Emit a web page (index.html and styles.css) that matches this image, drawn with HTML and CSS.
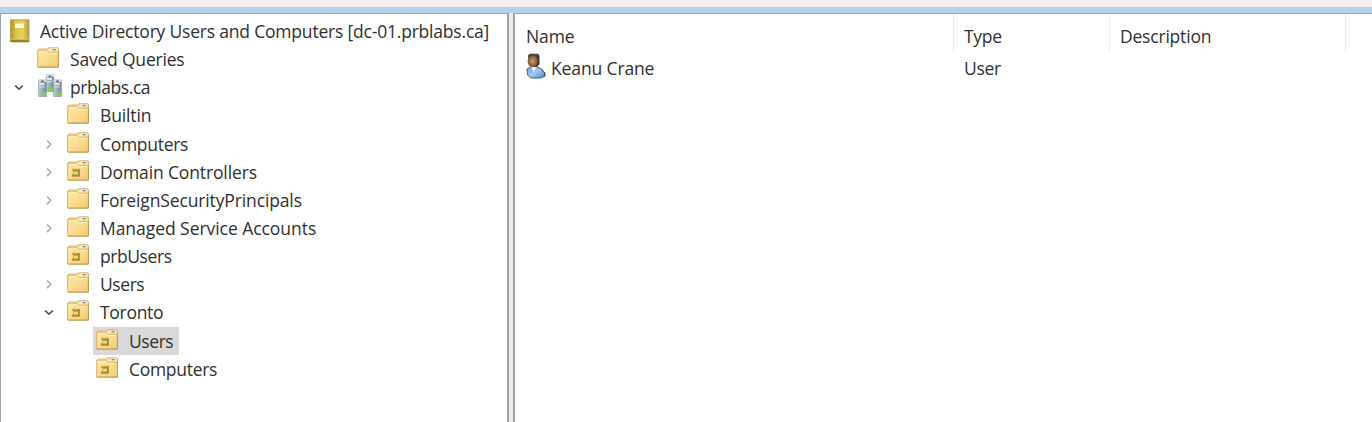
FILE: index.html
```html
<!DOCTYPE html>
<html lang="en">
<head>
<meta charset="utf-8">
<title>Active Directory Users and Computers</title>
<link rel="stylesheet" href="styles.css">
</head>
<body>
<svg class="defs" aria-hidden="true">
  <defs>
    <linearGradient id="gold" x1="0" y1="0" x2="1" y2="1"><stop offset="0" stop-color="#fde9b0"/><stop offset=".5" stop-color="#fbdd92"/><stop offset="1" stop-color="#f0cb70"/></linearGradient>
    <linearGradient id="cover" x1="0" y1="0" x2="1" y2="0"><stop offset="0" stop-color="#ae9125"/><stop offset=".25" stop-color="#d8be48"/><stop offset=".65" stop-color="#e6d16b"/><stop offset="1" stop-color="#b99a36"/></linearGradient>
    <linearGradient id="steel" x1="0" y1="0" x2="1" y2="0"><stop offset="0" stop-color="#bccad3"/><stop offset="1" stop-color="#788994"/></linearGradient>
    <radialGradient id="skin"><stop offset="0" stop-color="#c99b69"/><stop offset="1" stop-color="#7c5532"/></radialGradient>
    <linearGradient id="shirt" x1="0" y1="0" x2="1" y2="1"><stop offset="0" stop-color="#73a9df"/><stop offset=".5" stop-color="#9dc9f0"/><stop offset="1" stop-color="#5286bd"/></linearGradient>
    <symbol id="folder" viewBox="0 0 22 21">
      <path d="M.7 3.2 2 2H10L12 .8H20.8L21.5 1.6V20H.7Z" fill="url(#gold)" stroke="#cfae68" stroke-width=".9"/>
      <path d="M1.2 3.4H9.6L11.7 5.4H21" fill="none" stroke="#d8b566" stroke-width=".9"/>
      <path d="M1.5 4.4H9.2L11.3 6.4H20.6" fill="none" stroke="#fff0b7" stroke-width=".9"/>
      <path d="M12.5 3.6 14 1.6H20V3.9H12.5Z" fill="#f2edda"/>
      <path d="M15.5 2.7H18.8" stroke="#729199" stroke-width="1.3"/>
      <path d="M.8 20.2H21.4V5" fill="none" stroke="#bd9344" stroke-width=".8"/>
    </symbol>
    <symbol id="unit" viewBox="0 0 22 21">
      <use href="#folder" width="22" height="21"/>
      <path d="M5 8.8H12.6V16.6H5V14H6.2V11H5Z" fill="#c7aa43"/>
      <path d="M7 11H11V14.3H7Z" fill="#ecd680"/>
      <path d="M4.8 16H12.6M6.5 11H11M11.9 9V16" fill="none" stroke="#927722" stroke-width="1.2"/>
    </symbol>
    <symbol id="book" viewBox="0 0 20 24">
      <path d="M.5.8H19V23H.5Z" fill="url(#cover)" stroke="#b69a3d" stroke-width=".8"/>
      <path d="M1 20.5H19V23H1Z" fill="#a18127"/>
      <path d="M1 20H18.5" stroke="#ead77d" stroke-width=".8"/>
      <path d="M3 1V20" stroke="#c0a43b" stroke-width="1"/>
      <path d="M5 4.5H14V9H5Z" fill="#fff9c7"/>
    </symbol>
    <symbol id="tower" viewBox="0 0 9 18">
      <path d="M.5 1H8.5V17.5H.5Z" fill="url(#steel)" stroke="#8fa0aa" stroke-width=".7"/>
      <path d="M.6 1H8.4V3H.6Z" fill="#d1dce4"/>
      <path d="M3 2.2H6" stroke="#3c484f" stroke-width="1.1"/>
      <path d="M1.2 5H6.5" stroke="#f2f7f9" stroke-width="1.5"/>
      <path d="M1.2 7.8H6.5" stroke="#dce6eb" stroke-width="1"/>
    </symbol>
    <symbol id="domain" viewBox="0 0 26 24">
      <use href="#tower" x="8.5" y="0" width="9" height="18"/>
      <use href="#tower" x="1" y="5" width="9" height="18"/>
      <use href="#tower" x="16" y="5" width="9" height="18"/>
      <path d="M5 18.5H9V22.3H5ZM11.2 13.5H15.4V17.2H11.2ZM20 18.5H24V22.3H20Z" fill="#7bd348"/>
    </symbol>
    <symbol id="person" viewBox="0 0 20 26">
      <path d="M1 16 5 14H11L15 15.5 18.8 20V23.5L14 25H5L1.5 22Z" fill="url(#shirt)" stroke="#49627d" stroke-width="1"/>
      <path d="M5 14 7.5 19 11 14Z" fill="#e6f1fb"/>
      <path d="M2 2.5 4 .8H12L13.5 3V11L11 14H8L3 12Z" fill="#42382f"/>
      <ellipse cx="6.6" cy="8.2" rx="4.9" ry="6" fill="url(#skin)"/>
      <path d="M2 4.3Q7 1.3 12.6 4V1.3H4Z" fill="#4e4a45"/>
      <path d="M15 16 18.7 20V23" fill="none" stroke="#35475b" stroke-width="1"/>
    </symbol>
    <symbol id="closed" viewBox="0 0 16 16"><path d="M6 4.5 9.8 8.3 6 12.1" fill="none" stroke="#a9a9a9" stroke-width="1.5"/></symbol>
    <symbol id="open" viewBox="0 0 16 16"><path d="M4.2 6.6 8 10.2 11.8 6.6" fill="none" stroke="#555" stroke-width="1.7"/></symbol>
  </defs>
</svg>
<div class="window">
  <div class="toolbar"></div>
  <main class="panes">
    <nav class="tree">
      <div class="row root"><svg class="icon book"><use href="#book"/></svg><span class="label title">Active Directory Users and Computers [dc-01.prblabs.ca]</span></div>
      <div class="row l1"><span class="toggle"></span><svg class="icon"><use href="#folder"/></svg><span class="label title">Saved Queries</span></div>
      <div class="row l1"><svg class="toggle"><use href="#open"/></svg><svg class="icon domain"><use href="#domain"/></svg><span class="label tight">prblabs.ca</span></div>
      <div class="row l2"><span class="toggle"></span><svg class="icon"><use href="#folder"/></svg><span class="label">Builtin</span></div>
      <div class="row l2"><svg class="toggle"><use href="#closed"/></svg><svg class="icon"><use href="#folder"/></svg><span class="label snug">Computers</span></div>
      <div class="row l2"><svg class="toggle"><use href="#closed"/></svg><svg class="icon"><use href="#unit"/></svg><span class="label">Domain Controllers</span></div>
      <div class="row l2"><svg class="toggle"><use href="#closed"/></svg><svg class="icon"><use href="#folder"/></svg><span class="label">ForeignSecurityPrincipals</span></div>
      <div class="row l2"><svg class="toggle"><use href="#closed"/></svg><svg class="icon"><use href="#folder"/></svg><span class="label loose">Managed Service Accounts</span></div>
      <div class="row l2"><span class="toggle"></span><svg class="icon"><use href="#unit"/></svg><span class="label tight">prbUsers</span></div>
      <div class="row l2"><svg class="toggle"><use href="#closed"/></svg><svg class="icon"><use href="#folder"/></svg><span class="label tight">Users</span></div>
      <div class="row l2"><svg class="toggle"><use href="#open"/></svg><svg class="icon"><use href="#unit"/></svg><span class="label snug">Toronto</span></div>
      <div class="row l3"><div class="selected"><svg class="icon"><use href="#unit"/></svg><span class="label tight">Users</span></div></div>
      <div class="row l3"><div class="item"><svg class="icon"><use href="#unit"/></svg><span class="label snug">Computers</span></div></div>
    </nav>
    <section class="list">
      <div class="columns header"><span class="cell">Name</span><span class="cell snug">Type</span><span class="cell title">Description</span></div>
      <div class="columns entry"><span class="cell name"><svg class="person"><use href="#person"/></svg><span>Keanu Crane</span></span><span class="cell snug">User</span><span class="cell"></span></div>
    </section>
  </main>
</div>
</body>
</html>
```
FILE: styles.css
```css
* { box-sizing: border-box; }
body { margin: 0; overflow: hidden; background: #fff; color: #303030; font-family: "Open Sans", "Noto Sans", sans-serif; font-size: 17.5px; letter-spacing: -0.13px; }
.defs { position: absolute; width: 0; height: 0; }
.window { height: 422px; display: flex; flex-direction: column; }
.toolbar { flex: 0 0 13px; background: #f0f0f0; border-bottom: 6px solid #b8cfe8; }
.panes { flex: 1; display: grid; grid-template-columns: 509px 1fr; gap: 4px; background: #eaebef; min-height: 0; }
.tree { background: #fff; border: solid #a0a2aa; border-width: 1px 2px 0 1px; padding-top: 3px; }
.list { background: #fff; border: solid #a0a2aa; border-width: 1px 0 0 2px; }
.row { height: 28.15px; display: flex; align-items: center; white-space: nowrap; }
.root { padding-left: 9px; }
.l1 { padding-left: 10px; }
.l2 { padding-left: 40px; }
.l3 { padding-left: 92px; }
.toggle { width: 16px; height: 16px; flex: none; margin-right: 10px; }
.icon { width: 22px; height: 21px; flex: none; margin: 0 11px 3px 0; }
.book { width: 20px; height: 24px; margin: 0 10px 0 0; }
.domain { width: 26px; height: 24px; margin: 0 7px 3px 0; }
.label { line-height: 24px; }
.title { letter-spacing: -0.2px; }
.snug { letter-spacing: -0.3px; }
.tight { letter-spacing: -0.43px; }
.loose { letter-spacing: -0.05px; }
.selected, .item { display: flex; align-items: center; height: 28px; padding: 0 6px 0 3px; }
.selected { background: #d9d9d9; }
.columns { display: grid; grid-template-columns: 439px 156px 236px; }
.cell { padding-left: 10px; display: flex; align-items: center; }
.header { height: 39px; }
.header .cell { border-right: 1px solid #ececec; padding-top: 4px; }
.entry { height: 28px; }
.columns .cell:first-child { padding-left: 11px; }
.person { width: 20px; height: 26px; margin: 0 5px 3px 0; }
```
